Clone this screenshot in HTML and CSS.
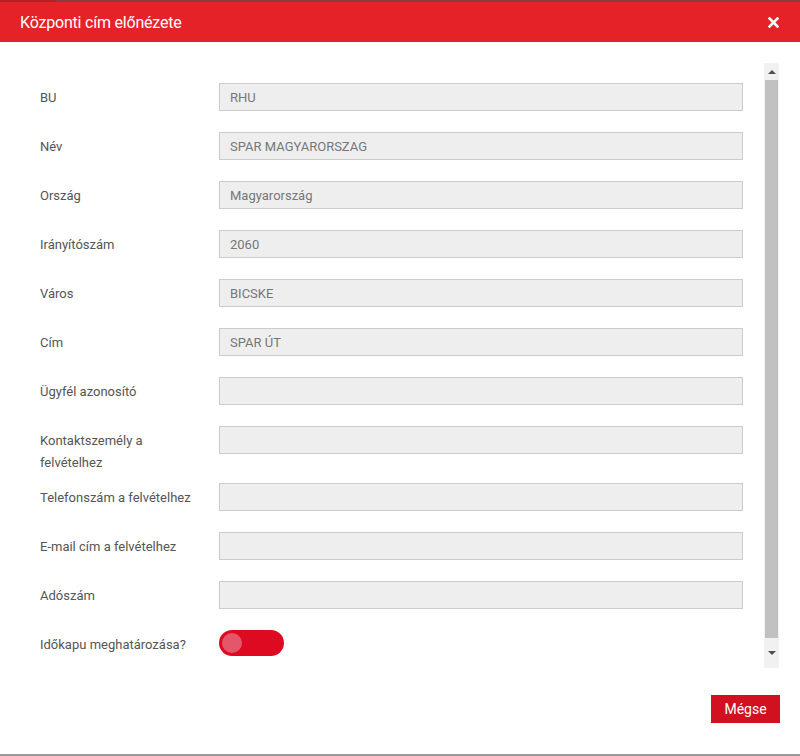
FILE: index.html
```html
<!DOCTYPE html>
<html lang="hu">
<head>
<meta charset="utf-8">
<title>Központi cím előnézete</title>
<link rel="stylesheet" href="styles.css">
</head>
<body>
<div class="modal">
  <div class="topline"><span class="topline-left"></span></div>
  <header class="modal-header">
    <h1 class="modal-title">Központi cím előnézete</h1>
    <button class="close-btn" aria-label="Bezárás">
      <svg width="11" height="11" viewBox="0 0 11 11"><path d="M1.5 1.5 L9.5 9.5 M9.5 1.5 L1.5 9.5" stroke="#fff" stroke-width="2.6" stroke-linecap="square"/></svg>
    </button>
  </header>
  <div class="modal-body">
    <form class="form">
      <div class="row"><label class="lbl">BU</label><div class="field"><div class="input">RHU</div></div></div>
      <div class="row"><label class="lbl">Név</label><div class="field"><div class="input">SPAR MAGYARORSZAG</div></div></div>
      <div class="row"><label class="lbl">Ország</label><div class="field"><div class="input">Magyarország</div></div></div>
      <div class="row"><label class="lbl">Irányítószám</label><div class="field"><div class="input">2060</div></div></div>
      <div class="row"><label class="lbl">Város</label><div class="field"><div class="input">BICSKE</div></div></div>
      <div class="row"><label class="lbl">Cím</label><div class="field"><div class="input">SPAR ÚT</div></div></div>
      <div class="row"><label class="lbl">Ügyfél azonosító</label><div class="field"><div class="input"></div></div></div>
      <div class="row"><label class="lbl">Kontaktszemély a felvételhez</label><div class="field"><div class="input"></div></div></div>
      <div class="row"><label class="lbl">Telefonszám a felvételhez</label><div class="field"><div class="input"></div></div></div>
      <div class="row"><label class="lbl">E-mail cím a felvételhez</label><div class="field"><div class="input"></div></div></div>
      <div class="row"><label class="lbl">Adószám</label><div class="field"><div class="input"></div></div></div>
      <div class="row"><label class="lbl">Időkapu meghatározása?</label><div class="field"><span class="toggle"><span class="knob"></span></span></div></div>
    </form>
    <div class="scrollbar">
      <div class="arrow arrow-up"></div>
      <div class="thumb"></div>
      <div class="arrow arrow-down"></div>
    </div>
  </div>
  <footer class="modal-footer">
    <button class="btn-cancel" type="button">Mégse</button>
  </footer>
</div>
<div class="bottomline"></div>
</body>
</html>
```

FILE: styles.css
```css
* { box-sizing: border-box; }
html, body { margin: 0; padding: 0; }
body {
  width: 800px;
  height: 756px;
  background: #fff;
  font-family: Roboto, "Liberation Sans", Arial, sans-serif;
  overflow: hidden;
}
.modal {
  height: 754px;
  display: flex;
  flex-direction: column;
  background: #fff;
}
.topline {
  height: 2px;
  background: #8c3b3b;
  display: flex;
}
.topline-left {
  width: 56px;
  background: #b52025;
}
.modal-header {
  height: 40px;
  background: #e42227;
  display: flex;
  align-items: center;
  justify-content: space-between;
  padding: 0 21px 0 20px;
}
.modal-title {
  margin: 0;
  font-size: 16px;
  font-weight: 400;
  color: #fff;
  letter-spacing: -0.2px;
}
.close-btn {
  background: none;
  border: 0;
  padding: 0;
  width: 11px;
  height: 11px;
  display: flex;
}
.modal-body {
  display: flex;
  padding: 21px 21px 0 0;
  height: 626px;
}
.form {
  flex: 1;
  padding: 20px 21px 0 40px;
}
.row {
  display: flex;
  align-items: flex-start;
}
.lbl {
  width: 179px;
  flex: none;
  font-size: 13px;
  line-height: 22px;
  color: #555;
  padding: 4px 20px 9px 0;
}
.field {
  flex: 1;
  padding-bottom: 21px;
}
.input {
  height: 28px;
  background: #eee;
  border: 1px solid #ccc;
  padding: 1px 10px 0;
  font-size: 13px;
  line-height: 26px;
  color: #777;
}
.toggle {
  display: flex;
  align-items: center;
  width: 65px;
  height: 26px;
  border-radius: 13px;
  background: #de0a22;
  padding-left: 3px;
}
.knob {
  width: 20px;
  height: 20px;
  border-radius: 50%;
  background: #e6566a;
}
.scrollbar {
  width: 15px;
  flex: none;
  height: 605px;
  background: #f1f1f1;
  display: flex;
  flex-direction: column;
  align-items: center;
}
.arrow {
  height: 17px;
  width: 15px;
  display: flex;
  align-items: center;
  justify-content: center;
}
.arrow::before {
  content: "";
  width: 0;
  height: 0;
  border-left: 4px solid transparent;
  border-right: 4px solid transparent;
}
.arrow-up::before { border-bottom: 4px solid #505050; }
.arrow-down::before { border-top: 4px solid #505050; }
.thumb {
  width: 13px;
  height: 558px;
  background: #c1c1c1;
}
.arrow-down { margin-top: auto; height: 30px; }
.modal-footer {
  flex: 1;
  display: flex;
  justify-content: flex-end;
  align-items: flex-start;
  padding: 27px 20px 0 0;
}
.btn-cancel {
  height: 28px;
  width: 69px;
  background: #d1111f;
  color: #fff;
  border: 0;
  font-family: Roboto, "Liberation Sans", Arial, sans-serif;
  font-size: 14px;
  padding: 0;
}
.bottomline {
  height: 2px;
  background: #9a9a9a;
}
```
